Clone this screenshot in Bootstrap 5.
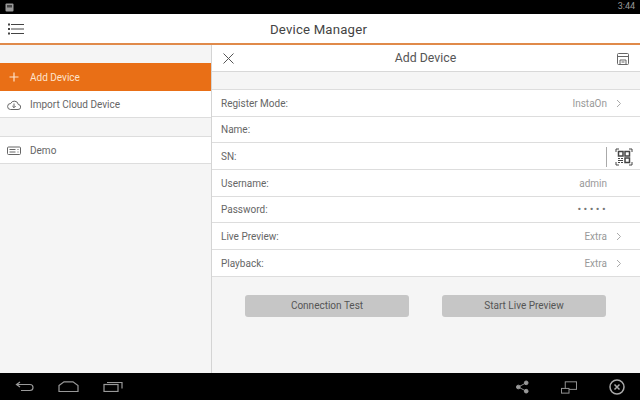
<!DOCTYPE html>
<html lang="en">
<head>
    <meta charset="UTF-8">
    <meta name="viewport" content="width=device-width, initial-scale=1.0">
    <title>Device Manager</title>
    <link href="https://cdn.jsdelivr.net/npm/bootstrap@5.3.0/dist/css/bootstrap.min.css" rel="stylesheet">
    <style>
        html, body { height: 400px; overflow: hidden; }
        body { background: #f5f5f5; font-family: Roboto, "Liberation Sans", sans-serif; font-size: 10px; color: #666; width: 640px; }
        .status-bar { height: 14px; background: #000; color: #999; font-size: 9px; padding: 0 5px; }
        .top-bar { height: 31px; background: #fff; border-bottom: 2px solid #e08a4a; }
        .top-bar .title { font-size: 13.2px; color: #444; letter-spacing: .2px; padding: 3px 3px 0 0; }
        .main { height: 328px; }
        .side { width: 212px; border-right: 1px solid #d4d4d4; padding-top: 18px; }
        .side-row { height: 27px; background: #fff; border-bottom: 1px solid #ddd; padding-left: 7px; gap: 9px; padding-top: 1px; }
        .side-row.active { height: 28px; background: #e96f16; color: #fde3cc; border-bottom: 0; padding-top: 0; }
        .side-gap { height: 19px; border-bottom: 1px solid #ddd; }
        .side-icon { width: 14px; }
        .panel-head { height: 27px; background: #fff; border-bottom: 1px solid #d8d8d8; padding: 1px 11px 0; font-size: 12.3px; color: #555; }
        .panel-gap { height: 18px; border-bottom: 1px solid #ddd; }
        .form-row-item { height: 26.67px; background: #fff; border-bottom: 1px solid #ddd; padding: 1px 26px 0 9px; }
        .val { color: #999; }
        .chev { width: 10px; margin-left: 7px; margin-right: -10px; }
        .no-chev { margin-right: 7px; }
        .dots { letter-spacing: 2.4px; font-size: 11px; color: #777; margin-right: 6px; }
        .scan-cell { margin-right: -19px; gap: 8px; }
        .scan-line { width: 1px; height: 20px; background: #aaa; }
        .btn-grey { width: 164px; height: 22px; background: #c6c6c6; border: 0; border-radius: 3px; font-size: 10px; color: #555; padding: 0; }
        .btn-wrap { gap: 33px; padding: 18px 0 0 33px; }
        .nav-bar { height: 27px; background: #000; padding: 0 15px; }
    </style>
</head>
<body>
    <!-- status bar -->
    <div class="status-bar d-flex align-items-center justify-content-between">
        <svg width="9" height="9" viewBox="0 0 9 9"><rect x=".5" y=".5" width="8" height="8" rx="1" fill="#999"/><rect x="2" y="2" width="5" height="2.500" fill="#444"/></svg>
        <span>3:44</span>
    </div>

    <!-- top bar -->
    <div class="top-bar position-relative d-flex align-items-center justify-content-center">
        <svg class="position-absolute top-50 translate-middle-y" style="left:8px" width="16" height="12" viewBox="0 0 16 12" fill="none" stroke="#444" stroke-width="1"><path d="M3 1.500h13M3 6h13M3 10.500h13"/><path d="M0 1.500h2M0 6h2M0 10.500h2" stroke-width="2"/></svg>
        <span class="title">Device Manager</span>
    </div>

    <div class="main d-flex">
        <!-- left list -->
        <div class="side flex-shrink-0">
            <div class="side-row active d-flex align-items-center">
                <svg class="side-icon" height="14" viewBox="0 0 14 14" stroke="#fde3cc" stroke-width="1.200"><path d="M7 2.500v9M2.500 7h9"/></svg>
                <span>Add Device</span>
            </div>
            <div class="side-row d-flex align-items-center">
                <svg class="side-icon" height="12" viewBox="0 0 14 12" fill="none" stroke="#666" stroke-width="1"><path d="M3.500 10.500h7.500a2.500 2.500 0 0 0 .3-5 4 4 0 0 0-7.600-1a3 3 0 0 0-.2 6z"/><path d="M7 4.500v4M5.300 7L7 8.700 8.700 7"/></svg>
                <span>Import Cloud Device</span>
            </div>
            <div class="side-gap"></div>
            <div class="side-row d-flex align-items-center">
                <svg class="side-icon" height="10" viewBox="0 0 14 10" fill="none" stroke="#666" stroke-width="1"><rect x=".5" y="1" width="13" height="7.500" rx="1"/><path d="M2.500 3.500h6M2.500 6h6M10.500 3.500h1M10.500 6h1"/></svg>
                <span>Demo</span>
            </div>
        </div>

        <!-- add device panel -->
        <div class="flex-grow-1">
            <div class="panel-head d-flex align-items-center justify-content-between">
                <svg width="11" height="11" viewBox="0 0 11 11" stroke="#555" stroke-width="1"><path d="M.5.500l10 10M10.500.500l-10 10"/></svg>
                <span>Add Device</span>
                <svg width="12" height="12" viewBox="0 0 12 12" fill="none" stroke="#666" stroke-width="1"><rect x=".5" y=".5" width="11" height="11" rx="1"/><path d="M.5 3.500h11M3 11.500V7h6v4.500M4.500 9h3"/></svg>
            </div>
            <div class="panel-gap"></div>

            <div class="form-row-item d-flex align-items-center justify-content-between">
                <span>Register Mode:</span>
                <span class="d-flex align-items-center"><span class="val">InstaOn</span>
                    <svg class="chev" height="9" viewBox="0 0 10 9" fill="none" stroke="#aaa"><path d="M3 1l3.500 3.500L3 8"/></svg></span>
            </div>
            <div class="form-row-item d-flex align-items-center"><span>Name:</span></div>
            <div class="form-row-item d-flex align-items-center justify-content-between">
                <span>SN:</span>
                <span class="scan-cell d-flex align-items-center">
                    <span class="scan-line"></span>
                    <svg width="18" height="18" viewBox="0 0 18 18" fill="none" stroke="#444"><path d="M1 4V1h3M14 1h3v3M1 14v3h3M17 14v3h-3"/><rect x="3.500" y="3.500" width="4.500" height="4.500" stroke-width="1.500"/><rect x="10" y="3.500" width="4.500" height="4.500" stroke-width="1.500"/><rect x="10" y="10" width="4.500" height="4.500" stroke-width="1.500"/><path d="M3 10.500h2M6 10.500h2M3 12.500h5M3 14.500h2M6 14.500h2" stroke-width="1.200"/></svg>
                </span>
            </div>
            <div class="form-row-item d-flex align-items-center justify-content-between">
                <span>Username:</span><span class="val no-chev">admin</span>
            </div>
            <div class="form-row-item d-flex align-items-center justify-content-between">
                <span>Password:</span><span class="dots">•••••</span>
            </div>
            <div class="form-row-item d-flex align-items-center justify-content-between">
                <span>Live Preview:</span>
                <span class="d-flex align-items-center"><span class="val">Extra</span>
                    <svg class="chev" height="9" viewBox="0 0 10 9" fill="none" stroke="#aaa"><path d="M3 1l3.500 3.500L3 8"/></svg></span>
            </div>
            <div class="form-row-item d-flex align-items-center justify-content-between">
                <span>Playback:</span>
                <span class="d-flex align-items-center"><span class="val">Extra</span>
                    <svg class="chev" height="9" viewBox="0 0 10 9" fill="none" stroke="#aaa"><path d="M3 1l3.500 3.500L3 8"/></svg></span>
            </div>

            <div class="btn-wrap d-flex">
                <button type="button" class="btn btn-grey">Connection Test</button>
                <button type="button" class="btn btn-grey">Start Live Preview</button>
            </div>
        </div>
    </div>

    <!-- android nav bar -->
    <div class="nav-bar d-flex align-items-center justify-content-between">
        <div class="d-flex align-items-center" style="gap:24px">
            <svg width="19" height="11" viewBox="0 0 19 11" fill="none" stroke="#999" stroke-width="1.200"><path d="M5 1L1.500 3.500 5 6M2 3.500h13a2.500 2.500 0 0 1 0 6H6"/></svg>
            <svg width="21" height="11" viewBox="0 0 21 11" fill="none" stroke="#999" stroke-width="1.200"><path d="M1 4.500L6 .8H15L20 4.500V10.500H1z"/></svg>
            <svg width="20" height="11" viewBox="0 0 20 11" fill="none" stroke="#999" stroke-width="1.200"><rect x="1" y="3.500" width="14" height="7"/><path d="M4 1.500h15v6"/></svg>
        </div>
        <div class="d-flex align-items-center" style="gap:32px">
            <svg width="13" height="14" viewBox="0 0 14 14" fill="#999" stroke="#999"><circle cx="2.500" cy="7" r="2"/><circle cx="11" cy="2.500" r="2"/><circle cx="11" cy="11.500" r="2"/><path d="M2.500 7L11 2.500M2.500 7L11 11.500" fill="none"/></svg>
            <svg width="16" height="14" viewBox="0 0 17 14" fill="none" stroke="#999"><rect x="4.500" y="1.500" width="12" height="8"/><rect x=".5" y="8.500" width="8" height="5" fill="#000"/></svg>
            <svg width="16" height="16" viewBox="0 0 16 16" fill="none" stroke="#aaa" stroke-width="1.500"><circle cx="8" cy="8" r="7"/><path d="M5.500 5.500l5 5M10.500 5.500l-5 5"/></svg>
        </div>
    </div>

    <script src="https://cdn.jsdelivr.net/npm/bootstrap@5.3.0/dist/js/bootstrap.bundle.min.js"></script>
</body>
</html>
